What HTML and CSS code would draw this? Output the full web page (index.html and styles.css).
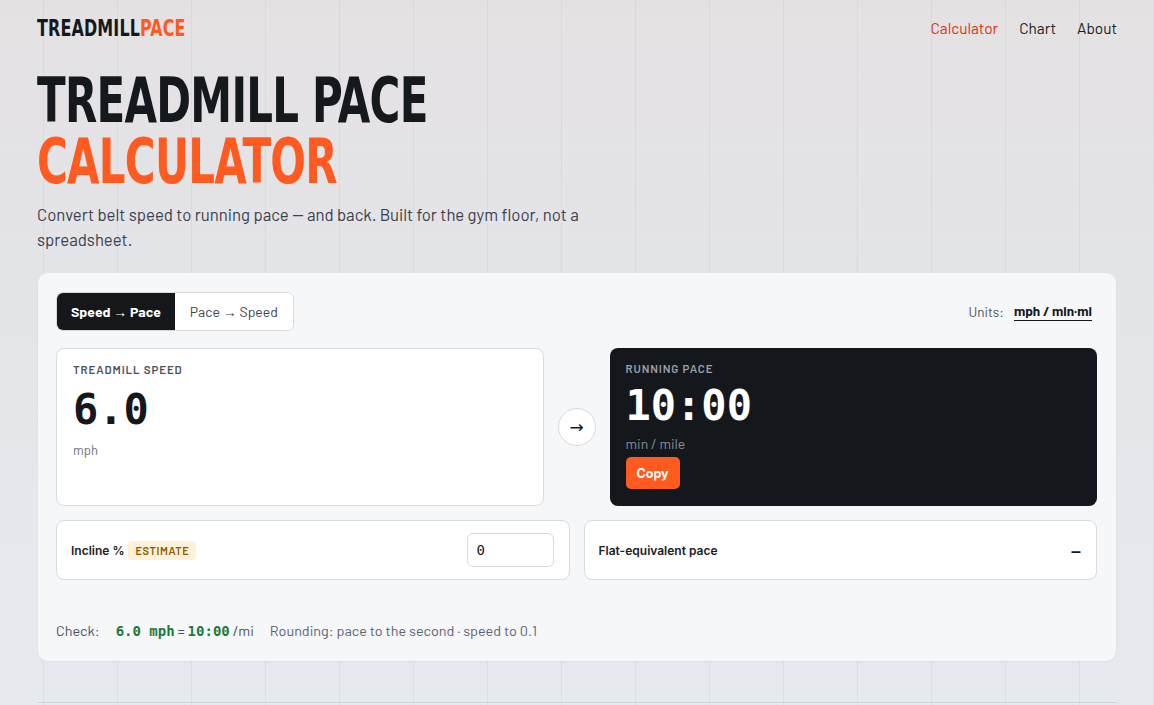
FILE: index.html
```html
<!DOCTYPE html>
<html lang="en">
<head>
<meta charset="utf-8">
<title>Treadmill Pace Calculator</title>
<link rel="stylesheet" href="styles.css">
</head>
<body>
<div class="page">
  <header class="topbar">
    <div class="logo"><span class="logo-dark">TREADMILL</span><span class="logo-accent">PACE</span></div>
    <nav class="nav">
      <a class="nav-link active" href="#">Calculator</a>
      <a class="nav-link" href="#">Chart</a>
      <a class="nav-link" href="#">About</a>
    </nav>
  </header>

  <section class="hero">
    <h1 class="title"><span class="title-line">TREADMILL PACE</span><span class="title-line accent">CALCULATOR</span></h1>
    <p class="lede">Convert belt speed to running pace — and back. Built for the gym floor, not a spreadsheet.</p>
  </section>

  <main class="card">
    <div class="card-top">
      <div class="toggle">
        <button class="seg seg-active">Speed → Pace</button>
        <button class="seg">Pace → Speed</button>
      </div>
      <div class="units"><span class="units-label">Units:</span><span class="units-value">mph / min·mi</span></div>
    </div>

    <div class="convert">
      <div class="panel panel-in">
        <div class="panel-label">TREADMILL SPEED</div>
        <div class="panel-value">6.0</div>
        <div class="panel-unit">mph</div>
      </div>
      <div class="arrow-wrap"><div class="arrow">→</div></div>
      <div class="panel panel-out">
        <div class="panel-label">RUNNING PACE</div>
        <div class="panel-value">10:00</div>
        <div class="panel-unit">min / mile</div>
        <button class="copy">Copy</button>
      </div>
    </div>

    <div class="extras">
      <div class="extra">
        <div class="extra-left"><span class="extra-label">Incline %</span><span class="badge">ESTIMATE</span></div>
        <div class="incline-input">0</div>
      </div>
      <div class="extra">
        <span class="extra-label">Flat-equivalent pace</span>
        <span class="dash">—</span>
      </div>
    </div>

    <div class="check">
      <span class="check-label">Check:</span>
      <span class="check-eq"><span class="mono">6.0 mph</span> = <span class="mono">10:00</span> /mi</span>
      <span class="check-note">Rounding: pace to the second · speed to 0.1</span>
    </div>
  </main>

  <footer class="footer"></footer>
</div>
</body>
</html>
```

FILE: styles.css
```css
* { box-sizing: border-box; }

html, body { height: 100%; }

body {
  margin: 0;
  font-family: "Barlow", Roboto, "Liberation Sans", sans-serif;
  color: #14171c;
  background-color: #e6e8ec;
  background-image:
    repeating-linear-gradient(90deg, rgba(60, 70, 90, 0.06) 0 1px, transparent 1px 74px),
    linear-gradient(180deg, #e5e1e3 0%, #e3e4e8 35%, #e6eaee 100%);
  background-position: 43px 0, 0 0;
}

.page {
  width: 1080px;
  margin: 0 auto;
}

.topbar {
  height: 55px;
  display: flex;
  align-items: center;
  justify-content: space-between;
}

.logo {
  font-family: "DejaVu Sans Condensed", sans-serif;
  font-weight: 700;
  font-size: 23px;
  letter-spacing: 0.2px;
  transform: scaleX(0.77);
  transform-origin: left center;
  white-space: nowrap;
}
.logo-dark { color: #15181d; }
.logo-accent { color: #ff5a1f; }

.nav {
  display: flex;
  gap: 21px;
}
.nav-link {
  font-size: 15.4px;
  color: #1b1e24;
  text-decoration: none;
}
.nav-link.active { color: #d8360f; }

.hero {
  padding-top: 15px;
}

.title {
  margin: 0;
  font-family: "DejaVu Sans Condensed", sans-serif;
  font-weight: 700;
  font-size: 62px;
  line-height: 61px;
  letter-spacing: -1px;
  color: #15181d;
}
.title-line {
  display: block;
  white-space: nowrap;
  transform: scaleX(0.753);
  transform-origin: left center;
}
.title-line.accent { color: #ff5a1f; }

.lede {
  margin: 10px 0 0;
  max-width: 590px;
  font-size: 16.75px;
  line-height: 25px;
  color: #3a414c;
}

.card {
  margin: 21px 1px 0;
  background: #f6f7f9;
  border-radius: 10px;
  padding: 19px 19px 22px 18px;
  box-shadow: 0 1px 2px rgba(20, 30, 40, 0.05);
}

.card-top {
  display: flex;
  align-items: center;
  justify-content: space-between;
}

.toggle {
  display: flex;
  border: 1px solid #d6dae0;
  border-radius: 7px;
  overflow: hidden;
  background: #fff;
}
.seg {
  font-family: inherit;
  font-size: 14px;
  height: 37px;
  padding: 0 14px 0 14px;
  border: 0;
  background: #fff;
  color: #3c4450;
}
.seg-active {
  background: #15171b;
  color: #fff;
  font-weight: 700;
}
.seg + .seg { padding: 0 15px; }

.units {
  display: flex;
  align-items: center;
  gap: 10px;
  font-size: 13.5px;
  padding-right: 5px;
}
.units-label { color: #4b5260; }
.units-value {
  font-weight: 700;
  color: #15181d;
  border-bottom: 1.5px solid #15181d;
  padding-bottom: 1px;
}

.convert {
  margin-top: 17px;
  display: grid;
  grid-template-columns: 1fr 38px 1fr;
  gap: 14px;
}

.panel {
  height: 158px;
  border-radius: 8px;
  padding: 13px 16px;
}
.panel-in {
  background: #fff;
  border: 1px solid #d8dce2;
}
.panel-out {
  background: #14171c;
  color: #fff;
}
.panel-label {
  font-size: 11.5px;
  font-weight: 600;
  letter-spacing: 0.9px;
  color: #4a525e;
}
.panel-value {
  margin-top: 8px;
  font-family: "DejaVu Sans Mono", monospace;
  font-weight: 700;
  font-size: 42px;
  line-height: 52px;
}
.panel-unit {
  margin-top: 6px;
  font-size: 13px;
  color: #6b7280;
}
.panel-out .panel-label { color: #9aa1ab; }
.panel-out .panel-value { margin-top: 5px; }
.panel-out .panel-unit {
  margin-top: 3px;
  font-size: 14px;
  color: #8a9099;
}
.copy {
  margin-top: 5px;
  height: 32px;
  padding: 0 11px;
  border: 0;
  border-radius: 5px;
  background: #ff5a1f;
  color: #fff;
  font-family: Inter, sans-serif;
  font-weight: 700;
  font-size: 12.5px;
}

.arrow-wrap {
  display: flex;
  align-items: center;
}
.arrow {
  width: 38px;
  height: 38px;
  border-radius: 50%;
  border: 1px solid #d6dae0;
  background: #fff;
  display: flex;
  align-items: center;
  justify-content: center;
  font-family: "DejaVu Sans", sans-serif;
  font-size: 17px;
  color: #15181d;
}

.extras {
  margin-top: 14px;
  display: grid;
  grid-template-columns: 1fr 1fr;
  gap: 14px;
}
.extra {
  height: 60px;
  background: #fff;
  border: 1px solid #d8dce2;
  border-radius: 8px;
  padding: 0 15px 0 14px;
  display: flex;
  align-items: center;
  justify-content: space-between;
}
.extra-left {
  display: flex;
  align-items: center;
  gap: 4px;
}
.extra-label {
  font-family: Inter, sans-serif;
  font-size: 12px;
  font-weight: 600;
  color: #1d2026;
}
.badge {
  background: #fdf1d8;
  color: #8a5a00;
  font-size: 11px;
  font-weight: 600;
  letter-spacing: 0.6px;
  padding: 3px 7px;
  border-radius: 4px;
}
.incline-input {
  width: 87px;
  height: 34px;
  border: 1px solid #d6dae0;
  border-radius: 6px;
  display: flex;
  align-items: center;
  padding-left: 9px;
  font-family: "DejaVu Sans Mono", monospace;
  font-size: 14px;
  color: #15181d;
}
.dash {
  font-weight: 700;
  font-size: 15px;
  color: #15181d;
}

.check {
  margin-top: 42px;
  display: flex;
  align-items: baseline;
  gap: 16px;
  font-size: 14.4px;
  color: #4b5260;
}
.check-eq { color: #4b5260; }
.mono {
  font-family: "DejaVu Sans Mono", monospace;
  font-weight: 700;
  color: #1e7a3c;
  font-size: 14px;
}
.check-note { color: #5b6270; }

.footer {
  margin-top: 41px;
  border-top: 1px solid #cfd5dc;
  height: 40px;
}
```
